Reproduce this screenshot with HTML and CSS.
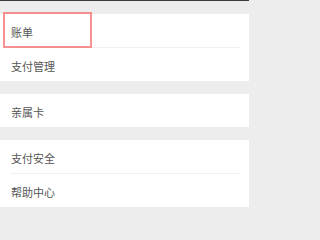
FILE: index.html
```html
<!DOCTYPE html>
<html>
<head>
<meta charset="utf-8">
<link rel="stylesheet" href="styles.css">
</head>
<body>
<div class="page">
  <div class="gap gap-top"></div>
  <div class="group">
    <div class="row row-hl"><span class="label">账单</span><span class="hl"></span></div>
    <div class="sep"></div>
    <div class="row"><span class="label">支付管理</span></div>
  </div>
  <div class="gap"></div>
  <div class="group">
    <div class="row"><span class="label">亲属卡</span></div>
  </div>
  <div class="gap"></div>
  <div class="group">
    <div class="row"><span class="label">支付安全</span></div>
    <div class="sep"></div>
    <div class="row"><span class="label">帮助中心</span></div>
  </div>
  <div class="gap gap-bottom"></div>
</div>
</body>
</html>
```
FILE: styles.css
```css
html, body {
  margin: 0;
  padding: 0;
  background: #ededed;
}
.page {
  width: 249px;
  height: 226px;
  overflow: hidden;
  border-top: 1px solid #3a3a3a;
  box-sizing: border-box;
  font-family: "Noto Sans CJK SC", "Noto Sans", sans-serif;
  display: flex;
  flex-direction: column;
}
.gap {
  height: 13px;
  background: #ededed;
  flex: none;
}
.gap-bottom {
  flex: 1;
}
.group {
  background: #ffffff;
  display: flex;
  flex-direction: column;
}
.row {
  height: 33px;
  box-sizing: border-box;
  padding-top: 3px;
  display: flex;
  align-items: center;
  padding-left: 11px;
  position: relative;
}
.label {
  font-size: 11px;
  color: #555555;
  line-height: 1;
}
.sep {
  height: 1px;
  margin-left: 10px;
  margin-right: 9px;
  background: #f0f0f0;
}
.hl {
  position: absolute;
  left: 3px;
  top: -2px;
  width: 89px;
  height: 36px;
  box-sizing: border-box;
  border: 2px solid rgba(245, 110, 110, 0.75);
}
```
